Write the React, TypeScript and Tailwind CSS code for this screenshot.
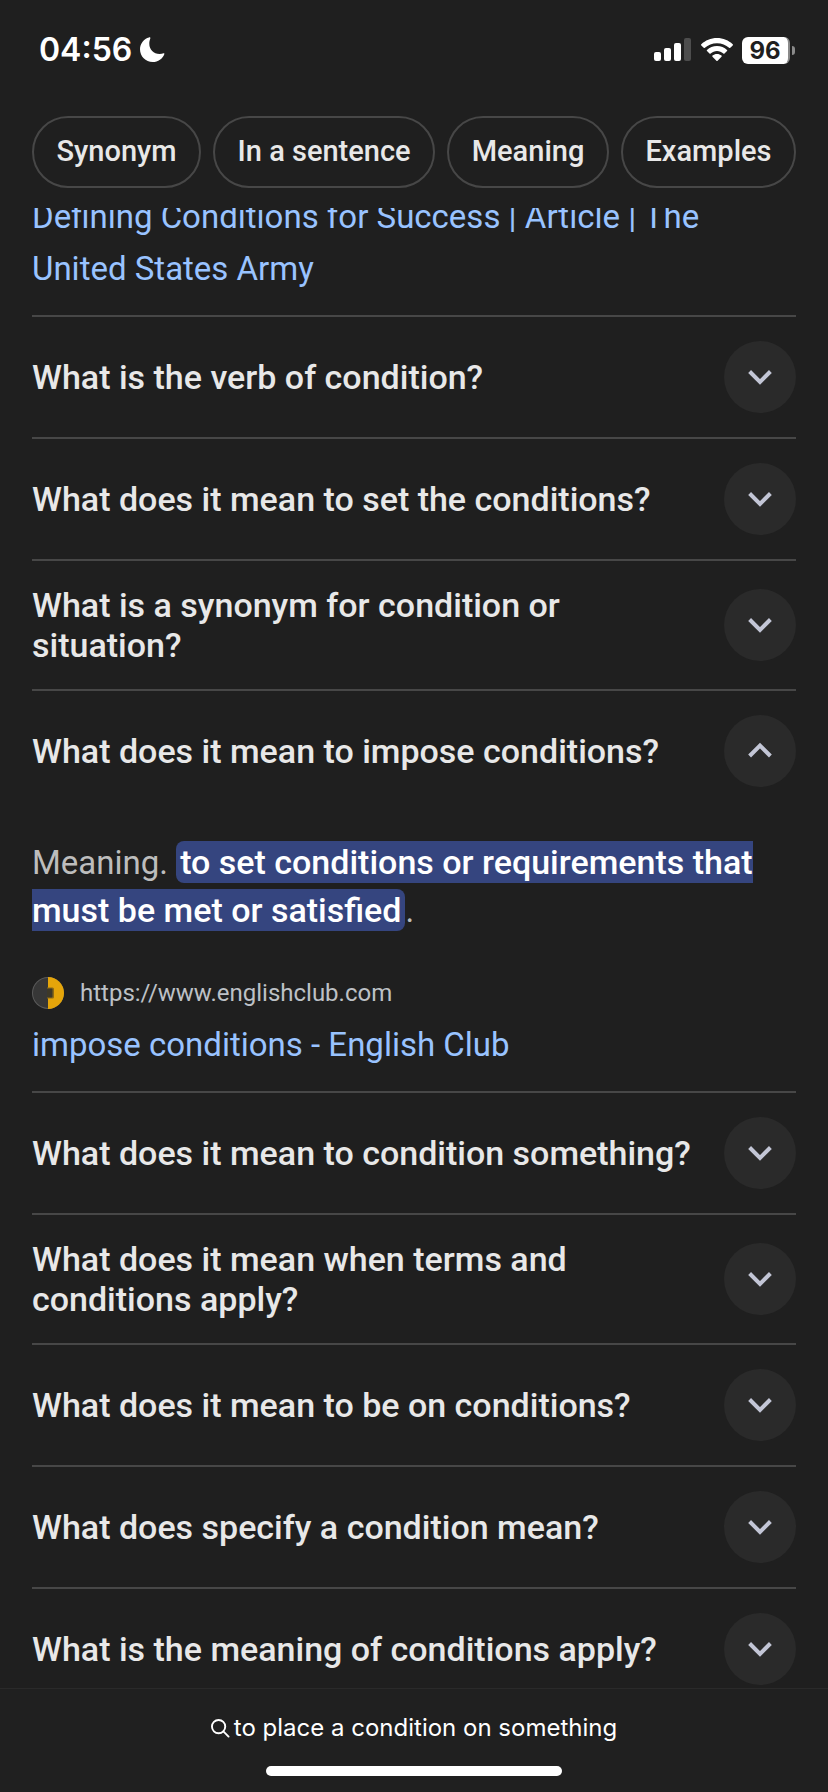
import { useState } from 'react';

interface Answer {
  lead: string;
  highlight: string;
  url: string;
  title: string;
}

interface Question {
  id: string;
  text: string;
  answer?: Answer;
}

const filters = ['Synonym', 'In a sentence', 'Meaning', 'Examples'];

const questions: Question[] = [
  { id: 'verb', text: 'What is the verb of condition?' },
  { id: 'set', text: 'What does it mean to set the conditions?' },
  { id: 'synonym', text: 'What is a synonym for condition or situation?' },
  {
    id: 'impose',
    text: 'What does it mean to impose conditions?',
    answer: {
      lead: 'Meaning.',
      highlight: 'to set conditions or requirements that must be met or satisfied',
      url: 'https://www.englishclub.com',
      title: 'impose conditions - English Club',
    },
  },
  { id: 'something', text: 'What does it mean to condition something?' },
  { id: 'terms', text: 'What does it mean when terms and conditions apply?' },
  { id: 'be-on', text: 'What does it mean to be on conditions?' },
  { id: 'specify', text: 'What does specify a condition mean?' },
  { id: 'apply', text: 'What is the meaning of conditions apply?' },
];

function StatusBar() {
  return (
    <div className="flex h-[100px] items-center justify-between pr-[33px] pl-[39px] font-['Inter',sans-serif] text-white">
      <div className="flex items-center gap-[7px]">
        <span className="text-[32px] leading-10 font-semibold">04:56</span>
        <svg width="26" height="26" viewBox="0 0 26 26" fill="currentColor" aria-hidden="true">
          <path d="M10 .4C5 1.600 1 6.500 1 12.300 1 19.400 6.600 25 13.700 25c5.400 0 10-3.300 11.700-8.100.2-.6-.3-.9-.8-.7-1.200.5-2.600.8-4 .8-6 0-10.300-4.400-10.300-10.300 0-2 .4-3.900 1-5.300.3-.7-.3-1.200-1.300-1z" />
        </svg>
      </div>
      <div className="flex items-center gap-[9px]">
        <svg width="38" height="24" viewBox="0 0 38 24" fill="currentColor" aria-hidden="true">
          <rect x="0" y="14" width="7" height="9" rx="2" />
          <rect x="10" y="10" width="7" height="13" rx="2" />
          <rect x="20" y="5" width="7" height="18" rx="2" />
          <rect x="30" y="0" width="7" height="23" rx="2" fill="#4d4d4d" />
        </svg>
        <svg width="32" height="24" viewBox="0 0 32 24" fill="currentColor" aria-hidden="true">
          <path d="M16 0C9.800 0 4.300 2.400.3 6.200c-.4.400-.4.800 0 1.200l2.400 2.400c.4.400.8.400 1.200 0C7 6.900 11.300 5.200 16 5.200s9 1.700 12.100 4.600c.4.400.8.400 1.200 0l2.400-2.400c.4-.4.4-.8 0-1.200C27.700 2.400 22.200 0 16 0z" />
          <path d="M16 8c-3.900 0-7.400 1.500-10 3.900-.4.400-.4.800 0 1.200l2.500 2.400c.4.400.8.400 1.200 0 1.700-1.500 3.900-2.400 6.300-2.400s4.600.9 6.300 2.400c.4.400.8.400 1.200 0l2.500-2.400c.4-.4.4-.8 0-1.200C23.400 9.500 19.900 8 16 8z" />
          <path d="M16 16c-1.800 0-3.300.6-4.500 1.600-.4.400-.4.800 0 1.200l3.900 4c.4.400.8.400 1.200 0l3.900-4c.4-.4.4-.8 0-1.200C19.300 16.600 17.800 16 16 16z" />
        </svg>
        <div className="flex items-center gap-[2px]">
          <span className="flex h-[27px] w-12 items-center justify-center rounded-md border-r-2 border-[#8a8a8a] bg-white pt-px text-2xl leading-none font-bold text-[#1f1f1f]">
            96
          </span>
          <span className="h-[9px] w-[3px] rounded-r-full bg-[#8a8a8a]" />
        </div>
      </div>
    </div>
  );
}

function Chevron({ open }: { open: boolean }) {
  return (
    <svg width="24" height="24" viewBox="0 0 24 24" fill="none" stroke="#c3c6d6" strokeWidth="4" aria-hidden="true">
      <path d={open ? 'M1.600 17L12 6.600 22.400 17' : 'M1.600 6.500L12 16.900 22.400 6.500'} />
    </svg>
  );
}

function Favicon() {
  return (
    <svg width="32" height="32" viewBox="0 0 32 32" aria-hidden="true">
      <circle cx="16" cy="16" r="16" fill="#5a5a5a" />
      <circle cx="16" cy="16" r="15" fill="#373737" />
      <path d="M16 0a16 16 0 0 1 0 32z" fill="#e5a50a" />
      <path d="M15 10.500h5.500q1.500 0 1.500 1.500v8q0 1.500-1.500 1.500H15z" fill="#8a6a18" />
      <path d="M15 11.500h4.500q1 0 1 1v7q0 1-1 1H15z" fill="#3d3829" />
    </svg>
  );
}

function AnswerPanel({ answer }: { answer: Answer }) {
  return (
    <div className="pt-7 pb-5">
      <p className="text-[33px] leading-12 text-[#bdbdbd]">
        {answer.lead}{' '}
        <mark className="rounded-lg bg-[#35457f] px-1 py-px text-[34px] leading-10 font-medium text-white">
          {answer.highlight}
        </mark>
        .
      </p>
      <div className="mt-10 flex h-9 items-center gap-4">
        <Favicon />
        <span className="text-2xl text-[#bdc1c6]">{answer.url}</span>
      </div>
      <a href={answer.url} className="mt-2 block text-[33px] leading-[52px] text-[#99c3ff]">
        {answer.title}
      </a>
    </div>
  );
}

interface QuestionItemProps {
  question: Question;
  isOpen: boolean;
  onToggle: () => void;
}

function QuestionItem({ question, isOpen, onToggle }: QuestionItemProps) {
  return (
    <li className="border-t-2 border-[#474747]">
      <button
        type="button"
        aria-expanded={isOpen}
        onClick={onToggle}
        className="flex w-full items-center justify-between gap-8 py-6 text-left"
      >
        <span className="text-[34px] leading-10 font-medium text-[#e8e8e8]">{question.text}</span>
        <span className="flex size-[72px] shrink-0 items-center justify-center rounded-full bg-[#2a2a2a]">
          <Chevron open={isOpen} />
        </span>
      </button>
      {isOpen && question.answer && <AnswerPanel answer={question.answer} />}
    </li>
  );
}

export default function App() {
  const [openId, setOpenId] = useState('impose');

  return (
    <div className="flex h-screen flex-col bg-[#1f1f1f] font-['Roboto',sans-serif]">
      <header className="shrink-0 pb-5">
        <StatusBar />
        <nav className="flex gap-3 px-8 pt-4">
          {filters.map((filter) => (
            <button
              key={filter}
              type="button"
              className="h-[72px] flex-auto rounded-full border-2 border-[#474747] text-[29px] font-medium whitespace-nowrap text-[#e8e8e8]"
            >
              {filter}
            </button>
          ))}
        </nav>
      </header>

      <main className="min-h-0 flex-1 overflow-hidden px-8">
        <a href="#army" className="-mt-[17px] mb-5 block pr-8 text-[33px] leading-[52px] text-[#99c3ff]">
          Defining Conditions for Success | Article | The United States Army
        </a>
        <ul>
          {questions.map((question) => (
            <QuestionItem
              key={question.id}
              question={question}
              isOpen={openId === question.id}
              onToggle={() => setOpenId(openId === question.id ? '' : question.id)}
            />
          ))}
        </ul>
      </main>

      <footer className="flex h-[104px] shrink-0 flex-col items-center justify-between border-t border-[#2a2a2a] bg-[#202020] pt-[21px] pb-4 font-['Inter',sans-serif] text-white">
        <div className="flex items-center gap-1">
          <svg width="19" height="19" viewBox="0 0 20 20" fill="none" stroke="currentColor" strokeWidth="2" strokeLinecap="round" aria-hidden="true">
            <circle cx="8" cy="8" r="7" />
            <path d="M13 13l5.500 5.500" />
          </svg>
          <span className="text-2xl leading-9">to place a condition on something</span>
        </div>
        <div className="h-[10px] w-[296px] rounded-full bg-white" />
      </footer>
    </div>
  );
}
